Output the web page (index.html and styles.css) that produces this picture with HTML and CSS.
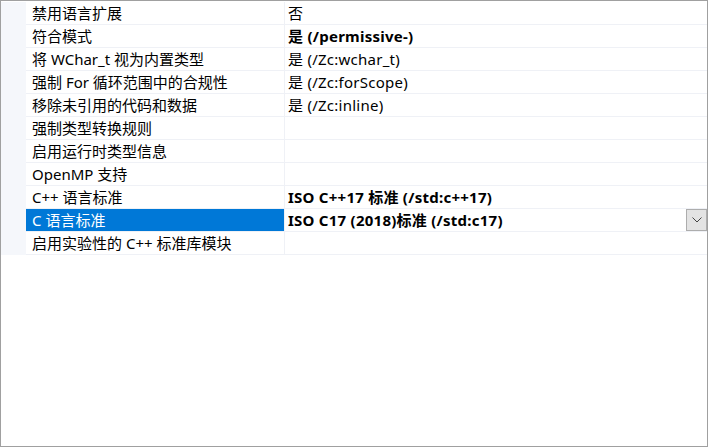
FILE: index.html
```html
<!DOCTYPE html>
<html lang="zh-CN">
<head>
<meta charset="utf-8">
<link rel="stylesheet" href="styles.css">
</head>
<body>
<div class="window">
  <div class="grid">
    <div class="row"><div class="gutter"></div><div class="name">禁用语言扩展</div><div class="value">否</div></div>
    <div class="row"><div class="gutter"></div><div class="name">符合模式</div><div class="value bold">是 (/permissive-)</div></div>
    <div class="row"><div class="gutter"></div><div class="name">将 WChar_t 视为内置类型</div><div class="value">是 (/Zc:wchar_t)</div></div>
    <div class="row"><div class="gutter"></div><div class="name">强制 For 循环范围中的合规性</div><div class="value">是 (/Zc:forScope)</div></div>
    <div class="row"><div class="gutter"></div><div class="name">移除未引用的代码和数据</div><div class="value">是 (/Zc:inline)</div></div>
    <div class="row"><div class="gutter"></div><div class="name">强制类型转换规则</div><div class="value"></div></div>
    <div class="row"><div class="gutter"></div><div class="name">启用运行时类型信息</div><div class="value"></div></div>
    <div class="row"><div class="gutter"></div><div class="name">OpenMP 支持</div><div class="value"></div></div>
    <div class="row"><div class="gutter"></div><div class="name">C++ 语言标准</div><div class="value bold">ISO C++17 标准 (/std:c++17)</div></div>
    <div class="row selected"><div class="gutter"></div><div class="name">C 语言标准</div><div class="value bold"><span class="vtext">ISO C17 (2018)标准 (/std:c17)</span><span class="dropbtn"><svg width="10" height="6" viewBox="0 0 10 6"><path d="M0.5 0.5 L5 5 L9.5 0.5" fill="none" stroke="#444" stroke-width="1"/></svg></span></div></div>
    <div class="row"><div class="gutter"></div><div class="name">启用实验性的 C++ 标准库模块</div><div class="value"></div></div>
  </div>
</div>
</body>
</html>
```

FILE: styles.css
```css
html, body {
  margin: 0;
  padding: 0;
  background: #ffffff;
}
.window {
  width: 708px;
  height: 447px;
  box-sizing: border-box;
  border: 1px solid #a0a0a0;
  background: #ffffff;
  font-family: "Noto Sans", "Noto Sans CJK SC", sans-serif;
  font-size: 15px;
  color: #000000;
  overflow: hidden;
}
.grid {
  display: flex;
  flex-direction: column;
  padding-top: 1px;
}
.row {
  display: grid;
  grid-template-columns: 25px 258px 1fr;
  height: 23px;
}
.gutter {
  background: #f5f7fb;
}
.name {
  border-bottom: 1px solid #eff1f6;
  padding-left: 6px;
  line-height: 22px;
  white-space: nowrap;
}
.value {
  border-bottom: 1px solid #eff1f6;
  border-left: 1px solid #eff1f6;
  padding-left: 3px;
  line-height: 22px;
  white-space: nowrap;
  letter-spacing: 0.25px;
  display: flex;
  align-items: center;
}
.bold {
  font-weight: 700;
}
.selected .name {
  background: #0078d7;
  color: #ffffff;
}
.vtext {
  flex: 1;
}
.dropbtn {
  width: 19px;
  height: 20px;
  border: 1px solid #adadad;
  background: #e3e3e3;
  display: flex;
  align-items: center;
  justify-content: center;
}
```
